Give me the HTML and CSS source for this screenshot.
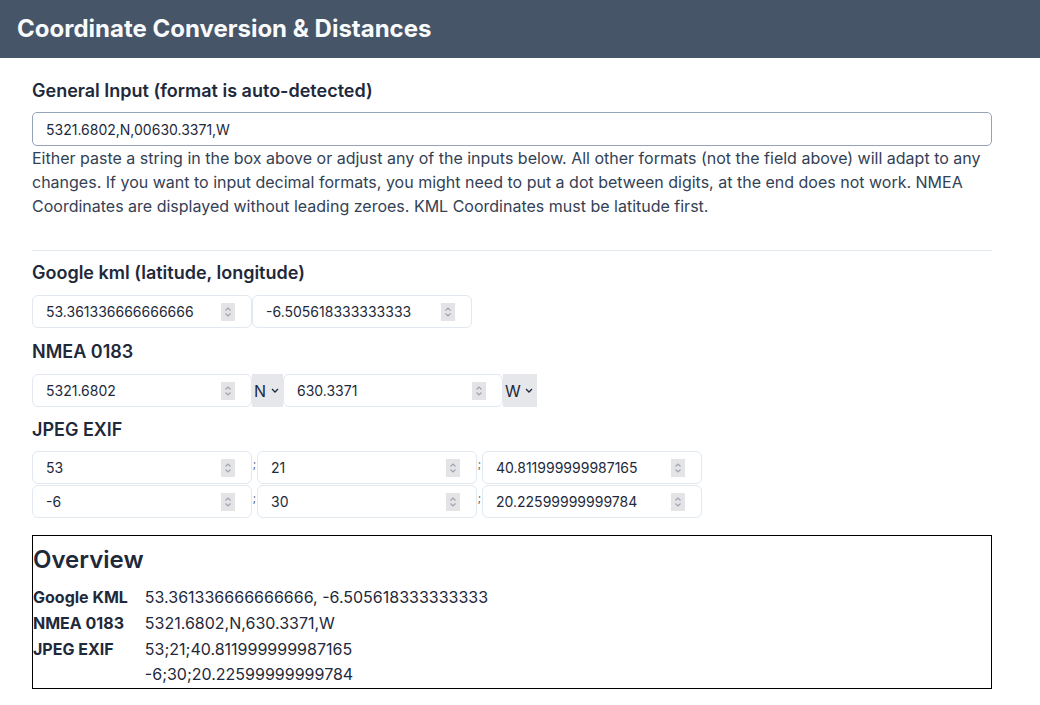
FILE: index.html
```html
<!DOCTYPE html>
<html lang="en">
<head>
<meta charset="utf-8">
<title>Coordinate Conversion &amp; Distances</title>
<link rel="stylesheet" href="styles.css">
</head>
<body>
<header class="topbar">
  <h1 class="title">Coordinate Conversion &amp; Distances</h1>
</header>
<main class="content">
  <section class="block">
    <h2 class="label label-first">General Input (format is auto-detected)</h2>
    <input class="general" type="text" value="5321.6802,N,00630.3371,W">
    <p class="help">Either paste a string in the box above or adjust any of the inputs below. All other formats (not the field above) will adapt to any changes. If you want to input decimal formats, you might need to put a dot between digits, at the end does not work. NMEA Coordinates are displayed without leading zeroes. KML Coordinates must be latitude first.</p>
  </section>
  <hr class="divider">
  <section class="block">
    <h2 class="label">Google kml (latitude, longitude)</h2>
    <div class="row">
      <label class="field"><input class="num" type="text" value="53.361336666666666"><span class="spin"><svg width="14" height="18" viewBox="0 0 14 18"><path d="M4.5 7.5 7 5 9.5 7.5M4.5 10.5 7 13 9.5 10.5" fill="none" stroke="#9ca3af" stroke-width="1.1"/></svg></span></label>
      <label class="field"><input class="num" type="text" value="-6.505618333333333"><span class="spin"><svg width="14" height="18" viewBox="0 0 14 18"><path d="M4.5 7.5 7 5 9.5 7.5M4.5 10.5 7 13 9.5 10.5" fill="none" stroke="#9ca3af" stroke-width="1.1"/></svg></span></label>
    </div>
    <h2 class="label">NMEA 0183</h2>
    <div class="row row-nmea">
      <label class="field"><input class="num" type="text" value="5321.6802"><span class="spin"><svg width="14" height="18" viewBox="0 0 14 18"><path d="M4.5 7.5 7 5 9.5 7.5M4.5 10.5 7 13 9.5 10.5" fill="none" stroke="#9ca3af" stroke-width="1.1"/></svg></span></label>
      <label class="dir"><select class="dir-select"><option>N</option><option>S</option></select><svg class="chev" width="8" height="5" viewBox="0 0 8 5"><path d="M1 1 4 4 7 1" fill="none" stroke="#1e293b" stroke-width="1.3"/></svg></label>
      <label class="field"><input class="num" type="text" value="630.3371"><span class="spin"><svg width="14" height="18" viewBox="0 0 14 18"><path d="M4.5 7.5 7 5 9.5 7.5M4.5 10.5 7 13 9.5 10.5" fill="none" stroke="#9ca3af" stroke-width="1.1"/></svg></span></label>
      <label class="dir"><select class="dir-select"><option>W</option><option>E</option></select><svg class="chev" width="8" height="5" viewBox="0 0 8 5"><path d="M1 1 4 4 7 1" fill="none" stroke="#1e293b" stroke-width="1.3"/></svg></label>
    </div>
    <h2 class="label label-exif">JPEG EXIF</h2>
    <div class="exif">
      <div class="row row-tight">
        <label class="field"><input class="num" type="text" value="53"><span class="spin"><svg width="14" height="18" viewBox="0 0 14 18"><path d="M4.5 7.5 7 5 9.5 7.5M4.5 10.5 7 13 9.5 10.5" fill="none" stroke="#9ca3af" stroke-width="1.1"/></svg></span></label><span class="sep">;</span>
        <label class="field"><input class="num" type="text" value="21"><span class="spin"><svg width="14" height="18" viewBox="0 0 14 18"><path d="M4.5 7.5 7 5 9.5 7.5M4.5 10.5 7 13 9.5 10.5" fill="none" stroke="#9ca3af" stroke-width="1.1"/></svg></span></label><span class="sep">;</span>
        <label class="field"><input class="num" type="text" value="40.811999999987165"><span class="spin"><svg width="14" height="18" viewBox="0 0 14 18"><path d="M4.5 7.5 7 5 9.5 7.5M4.5 10.5 7 13 9.5 10.5" fill="none" stroke="#9ca3af" stroke-width="1.1"/></svg></span></label>
      </div>
      <div class="row row-tight">
        <label class="field"><input class="num" type="text" value="-6"><span class="spin"><svg width="14" height="18" viewBox="0 0 14 18"><path d="M4.5 7.5 7 5 9.5 7.5M4.5 10.5 7 13 9.5 10.5" fill="none" stroke="#9ca3af" stroke-width="1.1"/></svg></span></label><span class="sep">;</span>
        <label class="field"><input class="num" type="text" value="30"><span class="spin"><svg width="14" height="18" viewBox="0 0 14 18"><path d="M4.5 7.5 7 5 9.5 7.5M4.5 10.5 7 13 9.5 10.5" fill="none" stroke="#9ca3af" stroke-width="1.1"/></svg></span></label><span class="sep">;</span>
        <label class="field"><input class="num" type="text" value="20.22599999999784"><span class="spin"><svg width="14" height="18" viewBox="0 0 14 18"><path d="M4.5 7.5 7 5 9.5 7.5M4.5 10.5 7 13 9.5 10.5" fill="none" stroke="#9ca3af" stroke-width="1.1"/></svg></span></label>
      </div>
    </div>
  </section>
  <section class="overview">
    <h2 class="ov-title">Overview</h2>
    <table class="ov-table">
      <tr><th>Google KML</th><td>53.361336666666666, -6.505618333333333</td></tr>
      <tr><th>NMEA 0183</th><td>5321.6802,N,630.3371,W</td></tr>
      <tr><th>JPEG EXIF</th><td>53;21;40.811999999987165<br>-6;30;20.22599999999784</td></tr>
    </table>
  </section>
</main>
</body>
</html>
```

FILE: styles.css
```css
* { box-sizing: border-box; }
html, body { margin: 0; padding: 0; background: #ffffff; }
body {
  font-family: Inter, "Noto Sans", sans-serif;
  color: #1e293b;
  font-size: 16px;
  line-height: 24px;
}
.topbar {
  background: #475569;
  height: 58px;
  display: flex;
  align-items: center;
  padding: 0 17px;
}
.title {
  margin: 0;
  font-size: 24px;
  font-weight: 700;
  color: #f8fafc;
}
.content {
  padding: 19px 48px 20px 32px;
}
.label {
  margin: 0 0 8px 0;
  font-size: 18px;
  font-weight: 600;
  line-height: 28px;
  color: #1e293b;
}
.label-first {
  margin-bottom: 7px;
}
.label-exif {
  margin-bottom: 7px;
}
.general {
  display: block;
  width: 100%;
  height: 34px;
  border: 1px solid #94a3b8;
  border-radius: 5px;
  padding: 0 13px;
  font-family: inherit;
  font-size: 14px;
  color: #1e293b;
  background: #fff;
}
.help {
  margin: 0;
  color: #334155;
}
.divider {
  border: 0;
  border-top: 1px solid #e2e8f0;
  margin: 32px 0 8px 0;
}
.row {
  display: flex;
  align-items: center;
  margin-bottom: 10px;
}
.row-nmea {
  margin-bottom: 9px;
}
.row-tight {
  margin-bottom: 1px;
  align-items: stretch;
}
.exif { margin-bottom: 17px; }
.field {
  display: flex;
  align-items: center;
  width: 220px;
  height: 33px;
  border: 1px solid #e2e8f0;
  border-radius: 6px;
  padding: 0 16px 0 13px;
  background: #fff;
}
.num {
  flex: 1;
  min-width: 0;
  border: 0;
  outline: none;
  padding: 0;
  font-family: inherit;
  font-size: 14px;
  color: #1e293b;
  background: transparent;
}
.spin {
  display: flex;
  width: 14px;
  height: 18px;
  background: #e4e4e7;
}
.dir {
  display: flex;
  align-items: center;
  gap: 4px;
  height: 33px;
  padding: 0 4px 0 2px;
  background: #e5e7eb;
}
.dir-select {
  appearance: none;
  -webkit-appearance: none;
  border: 0;
  padding: 0;
  margin: 0;
  background: transparent;
  font-family: inherit;
  font-size: 16px;
  color: #1e293b;
  outline: none;
}
.chev { display: block; }
.sep {
  width: 5px;
  font-size: 11px;
  line-height: 12px;
  color: #475569;
  text-align: center;
  padding-top: 7px;
}
.overview {
  border: 1px solid #000;
  padding: 8px 0 0 0;
}
.ov-title {
  margin: 0 0 9px 0;
  font-size: 24px;
  font-weight: 600;
  line-height: 32px;
}
.ov-table {
  border-collapse: collapse;
}
.ov-table th {
  text-align: left;
  font-weight: 700;
  font-size: 16px;
  vertical-align: top;
  padding: 0 17px 1px 0;
  line-height: 25px;
}
.ov-table td {
  padding: 0 0 1px 0;
  line-height: 25px;
}
```
